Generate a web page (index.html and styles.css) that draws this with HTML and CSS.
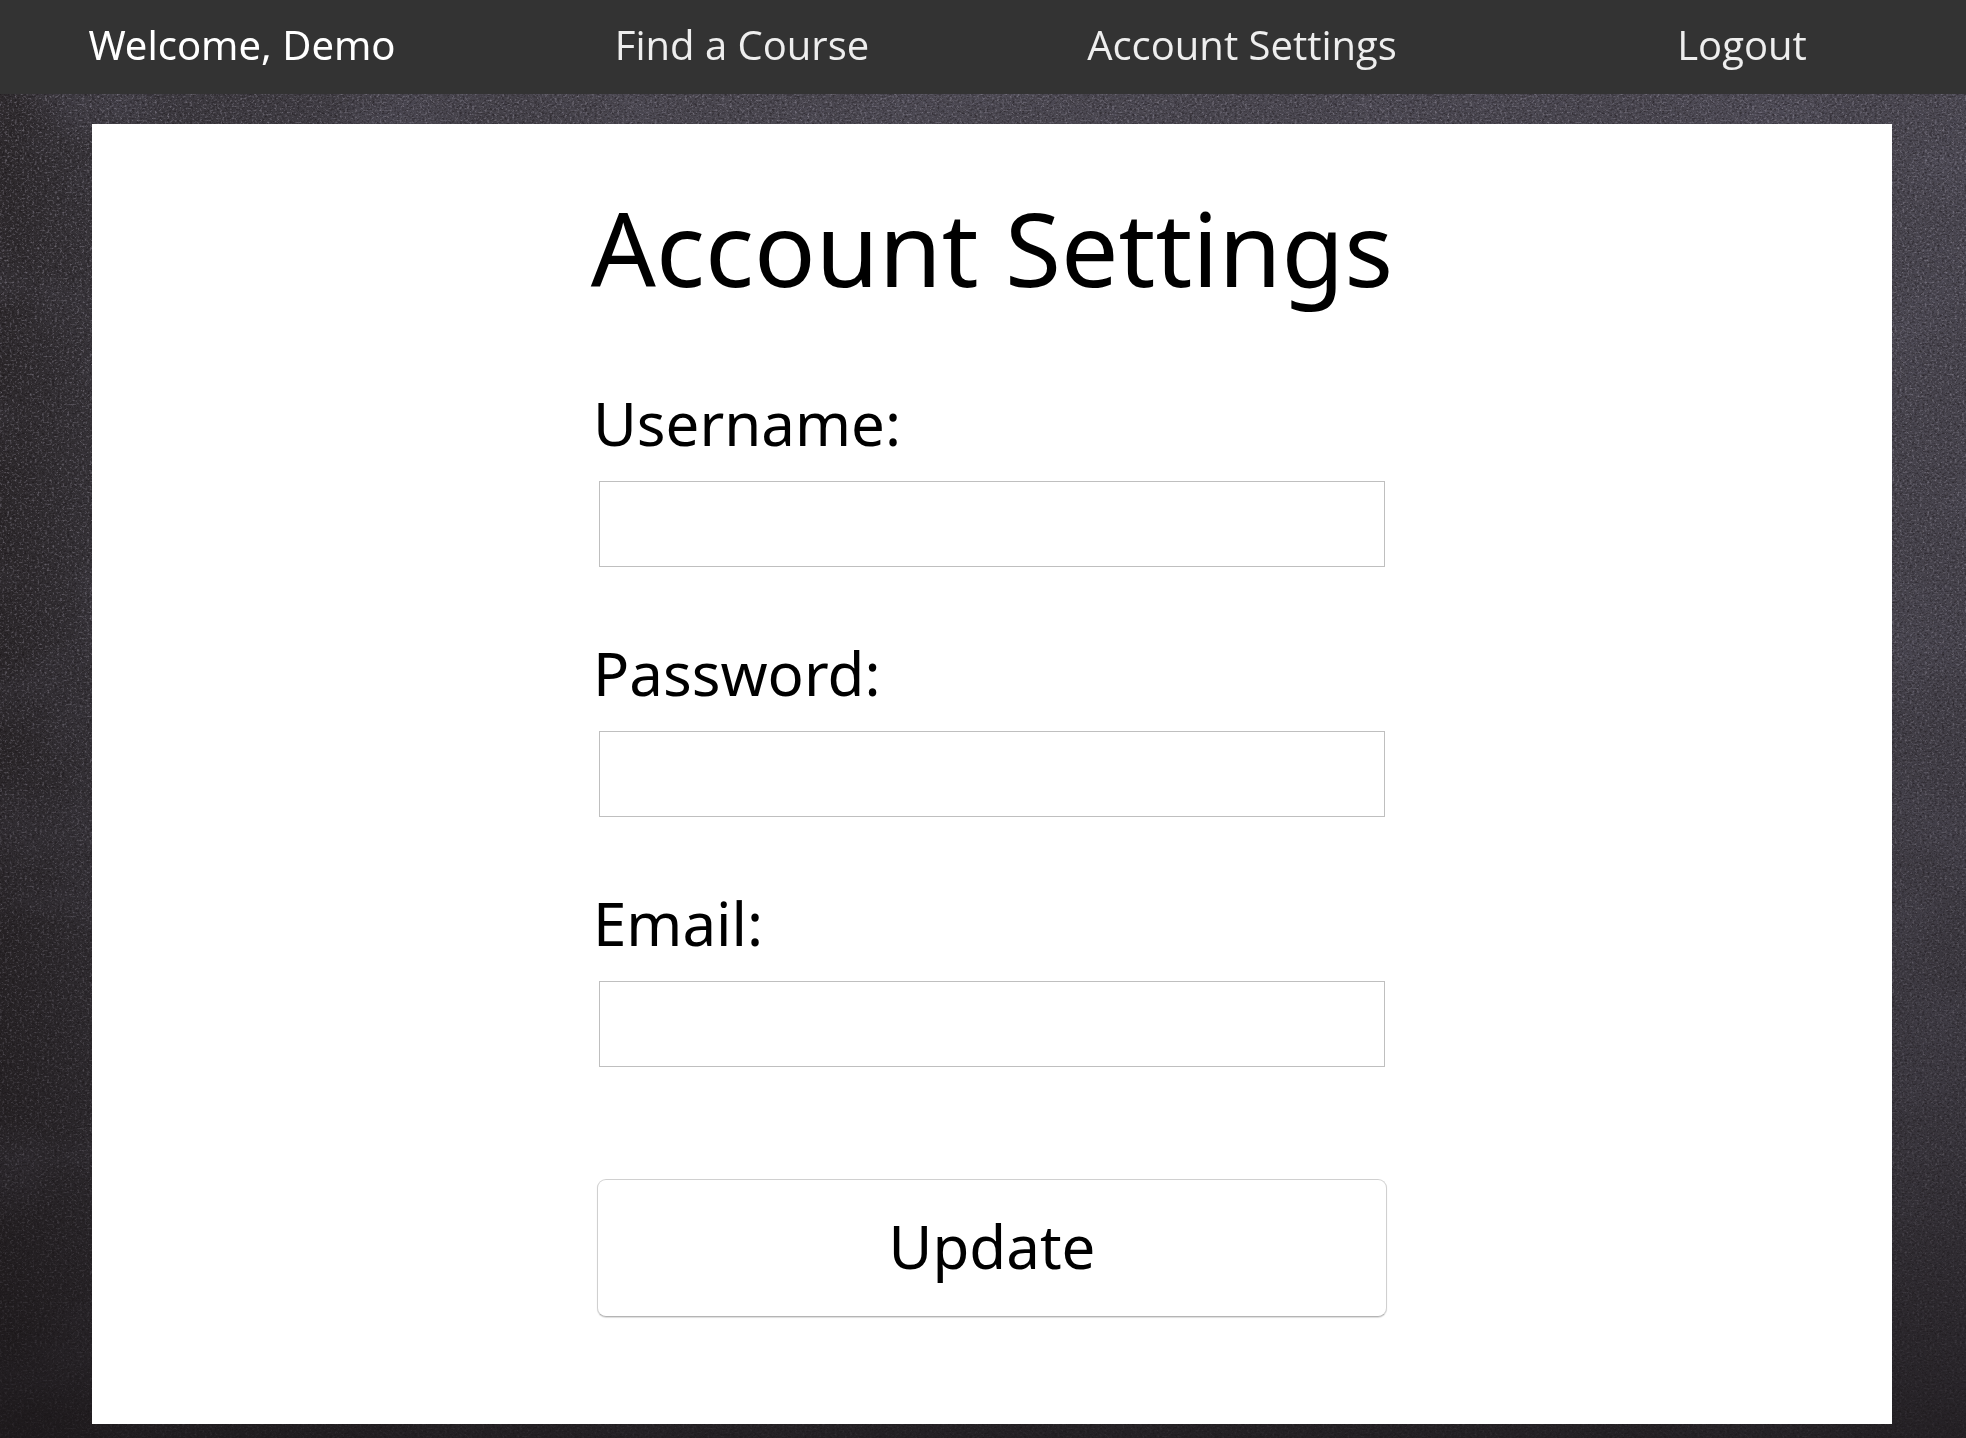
FILE: index.html
```html
<!DOCTYPE html>
<html lang="en">
<head>
<meta charset="utf-8">
<title>Account Settings</title>
<link rel="stylesheet" href="styles.css">
</head>
<body>
<svg class="board" aria-hidden="true" width="100%" height="100%">
  <defs>
    <linearGradient id="across"><stop offset="0" stop-color="#2e2a2d"/><stop offset=".06" stop-color="#3b383e"/><stop offset=".35" stop-color="#4b4851"/><stop offset="1" stop-color="#4b4852"/></linearGradient>
    <linearGradient id="down" x2="0" y2="1"><stop offset="0" stop-color="#171315" stop-opacity="0"/><stop offset=".4" stop-color="#171315" stop-opacity=".1"/><stop offset=".8" stop-color="#171315" stop-opacity=".4"/><stop offset="1" stop-color="#171315" stop-opacity=".75"/></linearGradient>
    <filter id="grain" x="0" y="0" width="100%" height="100%" color-interpolation-filters="sRGB">
      <feTurbulence type="fractalNoise" baseFrequency=".4 .5" numOctaves="3" seed="4"/>
      <feColorMatrix values="0 0 0 0 .72  0 0 0 0 .7  0 0 0 0 .76  1.2 0 0 0 -.62"/>
    </filter>
    <filter id="shade" x="0" y="0" width="100%" height="100%" color-interpolation-filters="sRGB">
      <feTurbulence type="fractalNoise" baseFrequency=".4 .55" numOctaves="2" seed="9"/>
      <feColorMatrix values="0 0 0 0 .06  0 0 0 0 .04  0 0 0 0 .05  1.2 0 0 0 -.54"/>
    </filter>
    <filter id="chalk" x="0" y="0" width="100%" height="100%" color-interpolation-filters="sRGB">
      <feTurbulence type="fractalNoise" baseFrequency=".006 .009" numOctaves="4" seed="12"/>
      <feColorMatrix values="0 0 0 0 .4  0 0 0 0 .39  0 0 0 0 .46  .7 0 0 0 -.32"/>
    </filter>
  </defs>
  <rect width="100%" height="100%" fill="url(#across)"/>
  <rect width="100%" height="100%" filter="url(#chalk)"/>
  <rect width="100%" height="100%" filter="url(#shade)"/>
  <rect width="100%" height="100%" filter="url(#grain)"/>
  <rect width="100%" height="100%" fill="url(#down)"/>
</svg>
<nav class="topbar">
  <ul class="menu">
    <li class="welcome">Welcome, Demo</li>
    <li><a href="#courses">Find a Course</a></li>
    <li><a href="#account">Account Settings</a></li>
    <li><a href="#logout">Logout</a></li>
  </ul>
</nav>
<main class="card">
  <h1 class="title">Account Settings</h1>
  <form class="form">
    <div class="field">
      <label for="username">Username:</label>
      <input id="username" type="text">
    </div>
    <div class="field">
      <label for="password">Password:</label>
      <input id="password" type="password">
    </div>
    <div class="field">
      <label for="email">Email:</label>
      <input id="email" type="email">
    </div>
    <button class="update" type="submit">Update</button>
  </form>
</main>
</body>
</html>
```
FILE: styles.css
```css
* {
  box-sizing: border-box;
}

body {
  margin: 0;
  background: #3d3a40;
  color: #000;
  font-family: "Noto Sans", sans-serif;
  display: flow-root;
}

.board {
  position: fixed;
  inset: 0;
  z-index: -1;
}

.topbar {
  background: #333;
  overflow: hidden;
}

/* The four columns run slightly past both edges of the bar. */
.menu {
  display: grid;
  grid-template-columns: repeat(4, 1fr);
  margin: 0 -26px 0 -8px;
  padding: 15px 0 19px;
  list-style: none;
  text-align: center;
  font-family: "Open Sans", sans-serif;
  font-size: 40px;
  line-height: 60px;
  color: #fff;
  white-space: nowrap;
}

.menu .welcome {
  font-family: "Noto Sans", sans-serif;
}

.menu a {
  color: #eee;
  text-decoration: none;
}

.card {
  margin: 30px 74px 14px 92px;
  padding: 64px 20px 107px;
  background: #fff;
}

.title {
  margin: 0 0 75px;
  font-size: 102px;
  line-height: 120px;
  font-weight: 400;
  text-align: center;
}

.form {
  display: flex;
  flex-direction: column;
  gap: 66px;
  max-width: 806px;
  margin: 0 auto;
}

.field {
  display: flex;
  flex-direction: column;
  gap: 18px;
}

.field label {
  padding-left: 4px;
  font-size: 60px;
  line-height: 80px;
}

.field input {
  height: 86px;
  min-width: 0;
  margin: 0 10px;
  padding: 0 16px;
  border: 1px solid #bfbfbf;
  border-radius: 0;
  background: #fff;
  font: inherit;
  font-size: 40px;
}

.update {
  margin: 46px 8px 0;
  padding: 26px 0 30px;
  border: 1px solid #d0d0d0;
  border-bottom-color: #b4b4b4;
  border-radius: 9px;
  background: #fff;
  box-shadow: 0 1px 1px #ddd;
  color: #000;
  font: inherit;
  font-size: 60px;
  line-height: 80px;
}
```
